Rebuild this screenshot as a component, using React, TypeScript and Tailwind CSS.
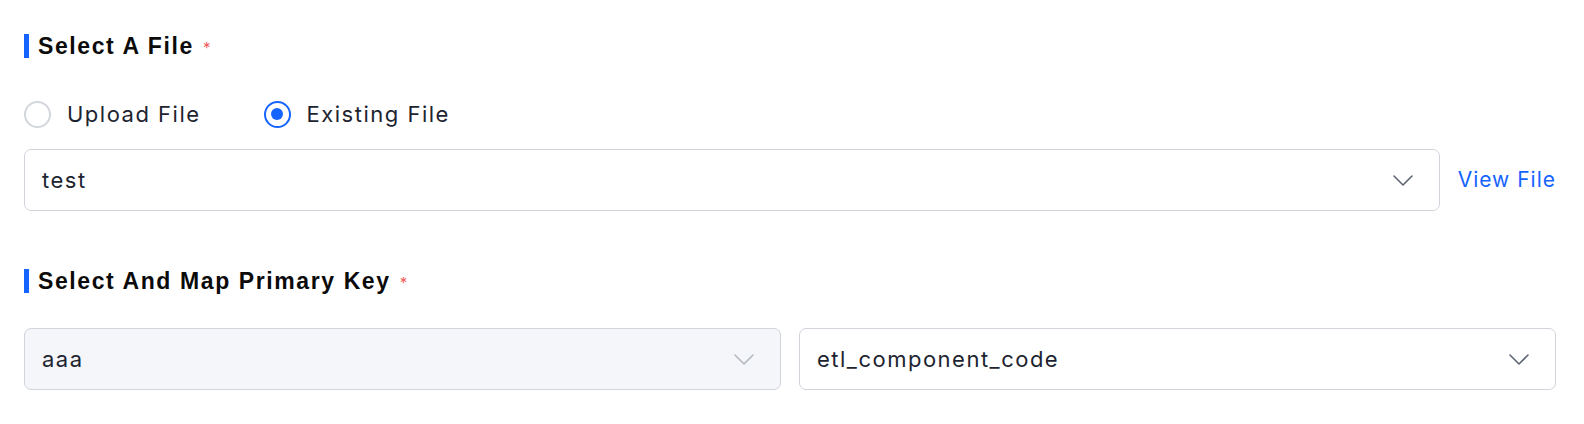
import React from "react";

const Chevron: React.FC<{ muted?: boolean }> = ({ muted = false }) => (
  <svg
    width="20"
    height="11"
    viewBox="0 0 20 11"
    fill="none"
    className={muted ? "text-[#b4b9c2]" : "text-[#5f6672]"}
  >
    <path d="M1 1l9 9 9-9" stroke="currentColor" strokeWidth="1.6" strokeLinecap="round" strokeLinejoin="round" />
  </svg>
);

const SectionTitle: React.FC<{ title: string }> = ({ title }) => (
  <div className="flex items-center h-6">
    <div className="w-[5px] h-6 bg-[#1664ff]" />
    <h2 className="ml-[9px] text-[23px] leading-6 font-bold text-[#0b0b0b] tracking-[1.6px] font-['Liberation_Sans',sans-serif]">
      {title}
    </h2>
    <span className="ml-[9px] text-[15px] text-[#f25b5b] self-start mt-[3px]">*</span>
  </div>
);

const SelectBox: React.FC<{ value: string; disabled?: boolean; className?: string }> = ({
  value,
  disabled = false,
  className = "",
}) => (
  <div
    className={`h-[62px] flex items-center justify-between px-[17px] rounded-[7px] border-[1.5px] border-[#d1d4db] ${
      disabled ? "bg-[#f4f6f9]" : "bg-white"
    } ${className}`}
  >
    <span className="text-[22px] text-[#1d2430] tracking-[1.5px]">{value}</span>
    <span className="mr-[9px]">
      <Chevron muted={disabled} />
    </span>
  </div>
);

const Radio: React.FC<{ label: string; checked?: boolean }> = ({ label, checked = false }) => (
  <label className="flex items-center">
    <span
      className={`w-[27px] h-[27px] rounded-full border-2 flex items-center justify-center ${
        checked ? "border-[#1664ff]" : "border-[#d3d6dd]"
      }`}
    >
      {checked && <span className="w-3 h-3 rounded-full bg-[#1664ff]" />}
    </span>
    <span className="ml-4 text-[22px] text-[#1d2430] tracking-[1.5px]">{label}</span>
  </label>
);

export default function App() {
  return (
    <div className="bg-white min-h-screen pl-6 pr-[28px] pt-[34px] font-['Inter',sans-serif]">
      <SectionTitle title="Select A File" />

      <div className="mt-[42px] flex items-center gap-[63px] h-7">
        <Radio label="Upload File" />
        <Radio label="Existing File" checked />
      </div>

      <div className="mt-[21px] flex items-center">
        <SelectBox value="test" className="flex-1" />
        <a className="ml-[18px] text-[21px] text-[#1664ff] tracking-[1px]">View File</a>
      </div>

      <div className="mt-[58px]">
        <SectionTitle title="Select And Map Primary Key" />
      </div>

      <div className="mt-[35px] grid grid-cols-2 gap-[18px]">
        <SelectBox value="aaa" disabled />
        <SelectBox value="etl_component_code" />
      </div>
    </div>
  );
}
